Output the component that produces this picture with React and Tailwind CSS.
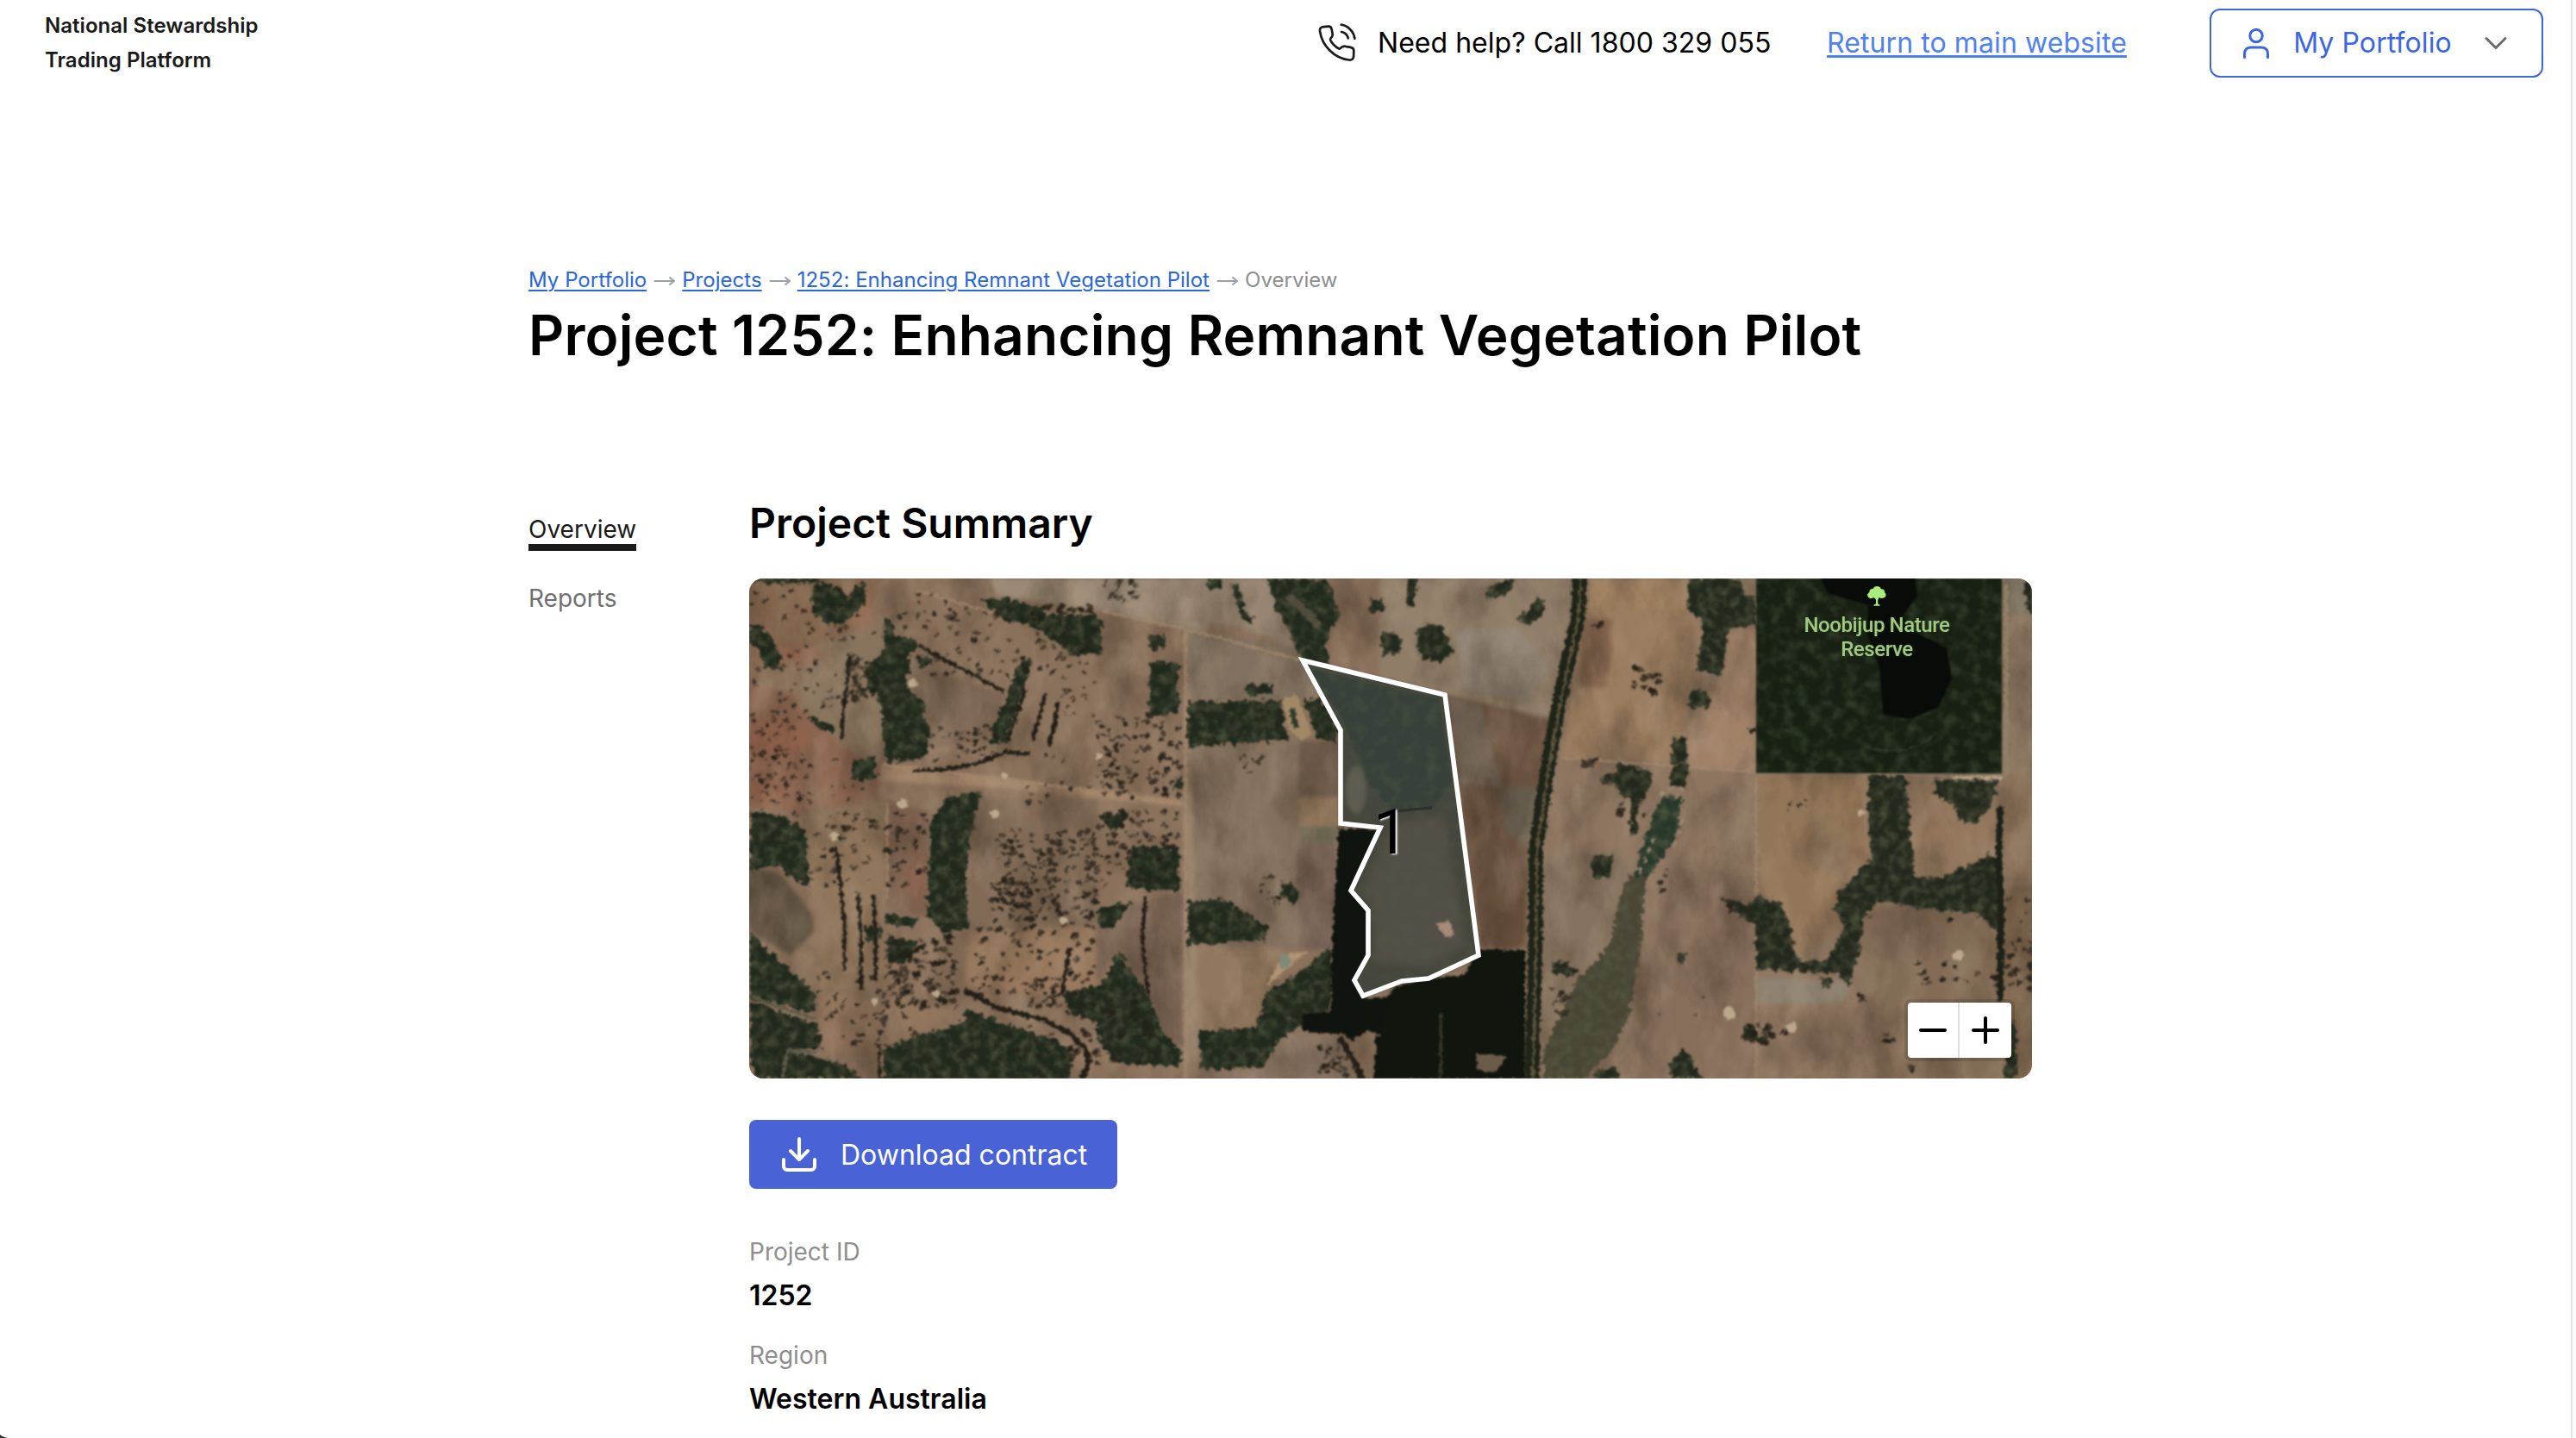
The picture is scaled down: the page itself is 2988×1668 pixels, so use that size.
import React from "react";

/* Small deterministic generator so that the trees are always scattered alike. */
function makeRandom(seed) {
  let s = seed;
  return () => {
    s = (s * 16807) % 2147483647;
    return s / 2147483647;
  };
}

function scatter(areas, seed) {
  const rnd = makeRandom(seed);
  const dots = [];
  areas.forEach(([x0, y0, x1, y1, n, size]) => {
    for (let i = 0; i < n; i++) {
      dots.push({
        x: x0 + rnd() * (x1 - x0),
        y: y0 + rnd() * (y1 - y0),
        rx: size * (0.5 + rnd() * 0.8),
        ry: size * (0.4 + rnd() * 0.7),
        a: -60 + rnd() * 50,
        o: 0.5 + rnd() * 0.45,
      });
    }
  });
  return dots;
}

const WEST = "matrix(0.4783 0 0 0.38265 -9 -11)";
const EAST = "matrix(0.4911 0 0 0.38265 731 -11)";

const westFields = [
  ["0,0 1600,0 1600,1600 0,1600", "#8a715b"],
  ["0,340 130,380 240,540 340,600 330,700 150,740 0,720", "#8a6550"],
  ["0,0 350,0 300,180 130,260 60,340 0,340", "#84674f"],
  ["150,250 345,150 345,560 250,520 140,420", "#88745d"],
  ["440,300 640,380 600,520 460,540 410,390", "#7c6654"],
  ["560,690 860,700 860,1080 550,1100", "#806a56"],
  ["0,900 90,920 150,1010 190,1080 120,1170 20,1100", "#635545"],
  ["160,750 350,700 350,1270 190,1270 165,950", "#90765c"],
  ["350,700 460,740 450,1050 355,1050", "#7b604e"],
  ["340,590 1070,700 1070,720 640,665 330,640", "#a3866a"],
  ["860,1040 1070,980 1070,1450 1020,1420 920,1160 860,1250", "#7b6555"],
  ["550,1100 860,1080 860,1270 780,1290 540,1270", "#98795e"],
  ["600,30 1100,30 1130,190 1070,180 880,130 730,100 620,80", "#9b8a77"],
  ["1100,30 1280,30 1350,250 1200,170 1080,160", "#968472"],
  ["1075,180 1350,240 1400,390 1080,400", "#80705f"],
  ["1080,535 1360,520 1350,1160 1080,1140", "#83705e"],
  ["1355,520 1450,520 1450,690 1350,690", "#6e5b4b"],
  ["1350,690 1450,690 1450,780 1350,780", "#8d7357"],
  ["1355,780 1450,780 1450,830 1355,830", "#6a6550"],
  ["1350,830 1445,830 1440,1150 1350,1160", "#776356"],
  ["1080,1140 1375,1155 1280,1260 1250,1400 1080,1400", "#91775d"],
  ["1260,1520 1330,1405 1450,1420 1500,1600 1110,1600 1110,1520", "#8a7564"],
  ["190,1280 340,1320 530,1330 350,1460 200,1470", "#92755d"],
  ["1072,190 1085,190 1110,1600 1072,1600", "#97806a"],
];

const westWoods = [
  "20,28 190,28 185,42 60,45 20,36",
  "175,60 200,38 240,60 262,90 280,55 300,45 298,110 262,150 235,170 205,165 170,130",
  "20,170 45,175 75,210 98,275 85,305 55,300 40,240 20,225",
  "348,150 365,150 370,200 420,210 430,240 405,255 410,300 395,350 445,405 440,450 458,480 452,560 420,580 350,585 340,430 330,380 305,370 300,300 345,250",
  "425,265 460,268 462,292 430,300",
  "585,90 640,88 730,115 730,135 850,140 875,160 875,255 800,265 770,225 700,170 640,155 600,120",
  "690,270 705,272 685,370 640,525 604,530 610,480 650,370 665,310",
  "990,282 1060,285 1060,435 988,448",
  "985,200 1020,200 1028,235 1000,248 988,230",
  "1082,405 1308,396 1325,520 1082,538",
  "1365,395 1400,390 1450,485 1440,525 1395,515",
  "1130,32 1165,32 1165,58 1135,60",
  "1188,45 1205,45 1222,140 1245,150 1240,165 1215,155",
  "1275,30 1420,30 1450,150 1430,180 1415,230 1430,290 1355,270 1330,190 1300,130",
  "1225,350 1290,350 1290,380 1225,382",
  "1525,90 1555,90 1560,125 1525,135",
  "20,735 90,745 155,790 165,960 130,945 90,900 20,915",
  "500,690 580,680 555,820 545,920 550,1095 490,1100 450,1050 455,900 460,760",
  "945,838 1060,845 1062,980 935,965",
  "870,745 935,740 930,780 900,797",
  "865,1030 945,1010 900,1085 865,1085",
  "1082,1005 1170,1003 1280,1090 1265,1125 1082,1140",
  "1310,965 1335,950 1352,970 1350,1000 1335,1015 1310,990",
  "20,1100 60,1150 130,1230 180,1290 182,1350 20,1300",
  "20,1310 185,1380 188,1455 110,1460 250,1500 290,1545 100,1545 40,1545 20,1500",
  "345,1455 470,1400 540,1370 542,1330 640,1380 740,1420 800,1455 800,1510 790,1600 345,1600",
  "780,1285 870,1260 915,1160 990,1300 1020,1400 1065,1460 1065,1505 910,1500 870,1440 860,1370 800,1350",
  "1110,1400 1250,1390 1270,1290 1350,1225 1430,1145 1430,1330 1310,1420 1265,1510 1115,1515",
  "350,1045 425,1060 420,1085 350,1075",
  "298,1085 340,1080 342,1120 305,1130",
  "355,1110 430,1130 400,1200 355,1190",
  "270,585 325,565 322,638 268,640",
  "165,445 225,475 225,495 175,475",
  "1052,635 1070,635 1070,668 1050,665",
];

const westBlack = [
  "1448,785 1550,790 1480,975 1525,1035 1525,1170 1485,1245 1505,1300 1560,1300 1600,1270 1600,1360 1560,1420 1520,1400 1480,1430 1460,1410 1360,1400 1360,1350 1430,1340 1430,1200",
  "1540,1420 1600,1380 1600,1600 1530,1600",
];

const westLines = [
  ["262,260 255,360 248,420 243,515", 9],
  ["430,232 530,300 640,372", 10],
  ["415,610 490,608 570,590 640,555 700,560", 11],
  ["688,365 668,440 645,520", 9],
  ["738,375 722,450 705,520", 9],
  ["768,400 760,470 745,540", 9],
  ["230,840 240,950 250,1080 250,1220", 8],
  ["282,980 290,1100 290,1275", 9],
  ["320,990 325,1120 326,1250", 9],
  ["980,990 972,1120 980,1230 988,1290", 9],
  ["795,1150 785,1230 778,1290", 9],
  ["540,1275 620,1330 730,1365 800,1410 838,1460 840,1510 825,1545", 13],
  ["335,1440 335,1545", 7],
  ["1450,1420 1490,1500 1510,1560", 16],
];

const westTrees = scatter(
  [
    [20, 180, 340, 420, 55, 6], [20, 420, 160, 720, 70, 6], [380, 110, 860, 330, 100, 7],
    [20, 40, 560, 180, 34, 7], [860, 440, 1065, 690, 100, 7], [460, 460, 620, 580, 40, 6],
    [620, 790, 860, 1060, 200, 7], [850, 730, 1060, 960, 110, 7], [350, 1110, 520, 1330, 110, 8],
    [560, 1060, 860, 1300, 85, 7], [165, 740, 450, 960, 80, 7], [620, 560, 960, 720, 26, 6],
    [780, 340, 860, 450, 18, 5], [600, 940, 700, 1030, 36, 7], [780, 1310, 1000, 1500, 60, 7],
    [260, 270, 330, 400, 36, 8], [880, 30, 960, 100, 16, 8], [680, 1240, 780, 1330, 34, 7],
    [180, 1220, 420, 1460, 60, 7], [1210, 560, 1265, 620, 16, 5], [1260, 930, 1320, 1020, 18, 5],
    [740, 110, 860, 135, 14, 7], [640, 1350, 860, 1480, 22, 6], [20, 560, 340, 780, 40, 5],
    [1400, 1440, 1470, 1540, 34, 6],
  ],
  4711
);

const eastFields = [
  ["0,0 1600,0 1600,1600 0,1600", "#8b745f"],
  ["0,30 460,30 410,460 150,380 0,330", "#8f7d68"],
  ["180,190 330,180 400,300 350,400 200,360", "#918477"],
  ["155,380 410,455 355,840 345,1150 240,1150", "#69513f"],
  ["160,390 240,410 290,660 190,650", "#6f6153"],
  ["275,660 380,660 350,840 300,800", "#645b4c"],
  ["493,30 730,30 730,120 495,120", "#a18263"],
  ["490,120 730,120 760,180 750,320 720,480 690,590 430,570", "#9a7d60"],
  ["480,150 550,150 540,360 470,360", "#866750"],
  ["820,180 888,175 888,612 728,605 728,480 810,330", "#a08168"],
  ["425,575 890,615 890,980 620,940 560,1000 480,1240 385,1250 390,900", "#8d7560"],
  ["895,620 1150,630 1155,880 1080,980 1100,1080 985,1180 950,1020 895,980", "#927659"],
  ["1250,630 1460,720 1460,870 1340,930 1260,940", "#91765b"],
  ["385,880 560,850 600,930 540,1140 460,1260 385,1440", "#85735f"],
  ["625,960 890,1000 890,1540 560,1540 605,1220", "#866e5a"],
  ["890,1210 1120,1250 1240,1540 890,1540", "#907761"],
  ["890,1240 1110,1250 1100,1310 890,1320", "#8e8272"],
  ["1145,1010 1430,1050 1465,1110 1465,1545 1180,1545 1120,1250", "#836c56"],
  ["1160,1030 1290,1030 1330,1120 1240,1205 1160,1170", "#7d6653"],
  ["1475,30 1570,30 1570,620 1475,620", "#8c7761"],
  ["1475,620 1570,620 1570,940 1475,940", "#8d745a"],
  ["1475,960 1570,960 1570,1545 1475,1545", "#80684f"],
  ["1475,30 1530,30 1530,140 1475,140", "#7c7362"],
];

const eastWoods = [
  "66,30 92,30 78,110 66,115",
  "5,200 30,190 52,215 45,255 15,260 5,235",
  "90,180 120,165 150,180 175,250 145,280 105,275 88,230",
  "250,60 280,40 318,32 310,60 275,90 252,80",
  "370,90 388,95 388,140 355,172 325,150 350,125",
  "730,30 852,30 860,75 888,85 888,170 825,175 808,320 750,310 765,160 730,125",
  "735,370 760,365 785,400 778,418 728,415",
  "690,512 728,512 725,590 690,590",
  "690,595 728,595 722,665 688,660",
  "560,590 610,600 648,620 630,690 605,720 610,790 595,810 590,770 595,700 575,690 560,655 520,650 530,625 560,615",
  "500,875 550,872 545,930 505,940",
  "410,1195 440,1190 472,1220 440,1235 405,1215",
  "685,1500 715,1455 735,1480 765,1545 690,1545",
  "510,1520 560,1510 570,1545 510,1545",
  "700,1165 725,1165 712,1200",
  "860,1385 885,1380 890,1420 925,1415 900,1440 862,1420",
  "830,1005 870,1015 900,990 950,1020 970,1080 985,1185 1055,1190 1100,1080 1075,1030 1085,980 1165,870 1155,790 1155,625 1245,628 1262,935 1330,935 1440,865 1470,880 1475,1110 1400,1040 1320,1035 1180,1005 1145,1050 1130,1180 1110,1262 1080,1225 890,1212 888,1080 840,1040",
  "1310,640 1460,640 1445,720 1410,765 1380,770 1360,720 1310,680",
  "1522,40 1570,40 1570,160 1530,130",
  "1480,1360 1505,1380 1507,1540 1475,1545",
  "1045,1240 1065,1240 1065,1265 1045,1265",
];

const eastCreek = [
  ["670,690 715,690 705,800 670,870 630,940 605,935 615,860 650,740", "#27382a"],
  ["590,930 630,935 615,1160 590,1350 555,1450 480,1545 390,1545 385,1470 410,1400 460,1260 545,1140 565,1010", "#4a4636"],
];

const eastTrees = scatter(
  [
    [600, 300, 660, 385, 16, 9], [400, 1270, 445, 1380, 9, 8], [655, 910, 680, 980, 7, 7],
    [1130, 1280, 1150, 1320, 5, 7], [1240, 1190, 1460, 1275, 18, 7], [1480, 1150, 1550, 1280, 24, 9],
    [1180, 1400, 1215, 1430, 4, 8], [480, 575, 510, 600, 6, 9], [560, 700, 640, 760, 7, 9],
    [860, 1380, 930, 1440, 12, 10], [810, 1000, 850, 1040, 8, 8], [500, 155, 535, 180, 7, 8],
    [1475, 980, 1550, 1140, 8, 6], [950, 1390, 985, 1420, 6, 6], [960, 700, 1010, 740, 5, 5],
    [1340, 1060, 1360, 1090, 2, 8], [1250, 1500, 1270, 1540, 4, 6], [870, 480, 888, 495, 4, 8],
    [610, 1300, 900, 1380, 3, 5], [1150, 1040, 1180, 1060, 2, 5],
  ],
  977
);

const paleSpots = [
  [190, 122, 5], [178, 262, 6], [285, 273, 5], [99, 299, 5], [406, 206, 4], [365, 397, 4],
  [217, 482, 4], [145, 491, 4], [296, 229, 4],
];

const parcel =
  "642,95 807,135 846,437 788,464 757,467 712,484 702,466 718,437 718,385 698,362 732,289 686,284 686,176";

function SatelliteMap() {
  const area = { x: 0, y: 0, width: 1488, height: 580, filterUnits: "userSpaceOnUse", colorInterpolationFilters: "sRGB" };
  return (
    <svg className="block h-[580px] w-[1488px]" viewBox="0 0 1488 580">
      <defs>
        <filter id="woods" {...area}>
          <feTurbulence type="fractalNoise" baseFrequency="0.15" numOctaves="3" seed="4" result="n" />
          <feDisplacementMap in="SourceGraphic" in2="n" scale="12" xChannelSelector="R" yChannelSelector="G" result="d" />
          <feTurbulence type="fractalNoise" baseFrequency="0.09" numOctaves="5" seed="14" result="g" />
          <feColorMatrix in="g" type="matrix" values="0 0 0 0 0.34  0 0 0 0 0.35  0 0 0 0 0.26  1.7 0 0 0 -0.68" result="c" />
          <feComposite in="c" in2="d" operator="in" result="t" />
          <feMerge result="m"><feMergeNode in="d" /><feMergeNode in="t" /></feMerge>
          <feGaussianBlur in="m" stdDeviation="0.9" />
        </filter>
        <filter id="reserve" {...area}>
          <feTurbulence type="fractalNoise" baseFrequency="0.07" numOctaves="5" seed="31" result="g" />
          <feColorMatrix in="g" type="matrix" values="0 0 0 0 0.3  0 0 0 0 0.34  0 0 0 0 0.25  1.3 0 0 0 -0.56" result="c" />
          <feComposite in="c" in2="SourceGraphic" operator="in" result="t" />
          <feMerge result="m"><feMergeNode in="SourceGraphic" /><feMergeNode in="t" /></feMerge>
          <feGaussianBlur in="m" stdDeviation="1" />
        </filter>
        <filter id="rough" {...area}>
          <feTurbulence type="fractalNoise" baseFrequency="0.2" numOctaves="2" seed="9" result="n" />
          <feDisplacementMap in="SourceGraphic" in2="n" scale="7" xChannelSelector="R" yChannelSelector="G" result="d" />
          <feGaussianBlur in="d" stdDeviation="0.8" />
        </filter>
        <filter id="soft" {...area}>
          <feGaussianBlur stdDeviation="5" />
        </filter>
        <filter id="fields" {...area}>
          <feGaussianBlur stdDeviation="2.5" />
        </filter>
        <filter id="mottle" {...area}>
          <feTurbulence type="fractalNoise" baseFrequency="0.018 0.012" numOctaves="5" seed="21" />
          <feColorMatrix type="matrix" values="0 0 0 0 0.22  0 0 0 0 0.17  0 0 0 0 0.12  1.6 0 0 0 -0.68" />
        </filter>
        <filter id="light" {...area}>
          <feTurbulence type="fractalNoise" baseFrequency="0.03 0.014" numOctaves="5" seed="63" />
          <feColorMatrix type="matrix" values="0 0 0 0 0.74  0 0 0 0 0.66  0 0 0 0 0.56  1.6 0 0 0 -0.7" />
        </filter>
      </defs>

      <g filter="url(#fields)">
        <g transform={WEST}>
          {westFields.map(([p, c]) => <polygon key={p} points={p} fill={c} />)}
        </g>
        <g transform={EAST}>
          {eastFields.map(([p, c]) => <polygon key={p} points={p} fill={c} />)}
        </g>
      </g>
      <g filter="url(#soft)" fill="#9a5f48" opacity="0.4">
        <ellipse cx="30" cy="185" rx="40" ry="22" />
        <ellipse cx="22" cy="245" rx="22" ry="14" />
        <ellipse cx="130" cy="40" rx="14" ry="24" />
        <ellipse cx="60" cy="90" rx="34" ry="10" />
        <ellipse cx="195" cy="345" rx="12" ry="34" />
      </g>
      <rect width="1488" height="580" filter="url(#mottle)" opacity="0.6" />
      <rect width="1488" height="580" filter="url(#light)" opacity="0.4" />

      <g filter="url(#rough)" fill="none" stroke="#a78c70" strokeWidth="3" opacity="0.6">
        <path d="M155 216 L330 237 L503 262M506 60V580M196 14 L290 42M410 38 L520 62 L640 95M160 260V370" />
        <path d="M1168 230V580M940 208 L1165 224" />
      </g>
      <path d="M1458 8V228" fill="none" stroke="#8f8067" strokeWidth="5" filter="url(#rough)" />

      <g filter="url(#woods)">
        <g transform={WEST} fill="#20291c">
          {westWoods.map((p) => <polygon key={p} points={p} />)}
        </g>
        <g transform={EAST}>
          <g fill="#22281c">{eastWoods.map((p) => <polygon key={p} points={p} />)}</g>
          {eastCreek.map(([p, c]) => <polygon key={p} points={p} fill={c} />)}
        </g>
      </g>
      <g filter="url(#reserve)">
        <polygon transform={EAST} points="890,20 1470,20 1470,620 890,618" fill="#172012" />
      </g>

      <g filter="url(#rough)">
        <g transform={WEST}>
          {westBlack.map((p) => <polygon key={p} points={p} fill="#10140e" />)}
          {westLines.map(([p, w]) => (
            <polyline key={p} points={p} fill="none" stroke="#231f18" strokeWidth={w} />
          ))}
          {westTrees.map((t, i) => (
            <ellipse key={i} cx={t.x} cy={t.y} rx={t.rx} ry={t.ry} fill="#241f17" opacity={t.o} transform={`rotate(${t.a} ${t.x} ${t.y})`} />
          ))}
          <polygon points="1312,400 1340,380 1352,400 1385,500 1360,520 1330,490" fill="#a18968" />
          <polygon points="1328,425 1340,422 1352,480 1338,482" fill="#2f3a2a" />
          <path d="M1275 1265 L1375 1158 L1330 1165 L1298 1200Z" fill="#b19474" />
          <ellipse cx="1318" cy="1188" rx="14" ry="22" fill="#7f8a78" />
          <path d="M20 1295 L180 1365M100 1545 L110 1460 L180 1465" fill="none" stroke="#5b5a47" strokeWidth="9" />
          <path d="M1325 80 L1370 130 L1400 175" fill="none" stroke="#5d5546" strokeWidth="22" opacity="0.8" />
        </g>
        <g transform={EAST}>
          <path d="M474 20 L468 150 L425 400 L395 620 L370 850 L368 1150 L360 1560" fill="none" stroke="#1f2418" strokeWidth="34" />
          <path d="M476 20 L470 150 L428 400 L398 620 L372 850 L370 1150 L362 1560" fill="none" stroke="#5f563e" strokeWidth="6" />
          <polygon points="235,1153 345,1155 343,1545 0,1545 0,1400 30,1270 115,1240 200,1230" fill="#10150e" />
          <path d="M145 1350 L145 1545" stroke="#3b3628" strokeWidth="7" />
          <path d="M228 1470 L300 1475 L275 1525 L232 1520Z" fill="#6d5b4a" />
          <path d="M1466 720 L1462 900 L1468 1050 L1466 1310" fill="none" stroke="#1e2118" strokeWidth="15" />
          <path d="M1350 632 H1470" stroke="#b5a98f" strokeWidth="8" />
          {eastTrees.map((t, i) => (
            <ellipse key={i} cx={t.x} cy={t.y} rx={t.rx} ry={t.ry} fill="#241f17" opacity={t.o} transform={`rotate(${t.a} ${t.x} ${t.y})`} />
          ))}
        </g>
        <g fill="#bba88c">
          {paleSpots.map(([x, y, r]) => <circle key={`${x}-${y}`} cx={x} cy={y} r={r} />)}
          <circle cx="1137" cy="504" r="7" /><circle cx="1209" cy="521" r="6" /><circle cx="1402" cy="437" r="6" />
          <circle cx="1290" cy="271" r="4" />
        </g>
        <path d="M1056 251 L1066 243 L1083 244 L1080 290 L1070 315M1050 300 L1036 335 L1030 345" fill="none" stroke="#9b8c76" strokeWidth="2.500" strokeDasharray="7 6" />
        <path d="M1295 195 Q1345 210 1378 178" fill="none" stroke="#3d4639" strokeWidth="2" opacity="0.7" />
      </g>
      <g filter="url(#fields)" transform={EAST}>
        <path d="M1040 20 L1265 20 L1270 80 L1235 145 L1265 190 L1340 240 L1352 330 L1320 420 L1250 455 L1190 440 L1182 300 L1150 190 L1155 110 L1060 75Z" fill="#080b08" />
        <ellipse cx="655" cy="1520" rx="36" ry="22" fill="#a1958a" opacity="0.7" />
      </g>

      <polygon points={parcel} fill="#484c44" filter="url(#fields)" />
      <g filter="url(#reserve)">
        <polygon points={parcel} fill="#45463d" />
        <polygon points="650,105 800,140 815,235 792,268 750,272 715,235 690,165" fill="#374039" />
      </g>
      <polygon points="752,282 806,276 830,425 788,450 725,445 725,385 712,362 738,300" fill="#635a51" opacity="0.45" filter="url(#soft)" />
      <ellipse cx="704" cy="245" rx="12" ry="28" fill="#6f6b5e" opacity="0.6" filter="url(#fields)" />
      <path d="M796 400 L812 398 L818 414 L808 416Z" fill="#a58a78" filter="url(#rough)" />
      <path d="M748 270 L792 266" stroke="#2b322c" strokeWidth="3" />
      <polygon points={parcel} fill="none" stroke="#fff" strokeWidth="5.600" strokeLinejoin="miter" />
    </svg>
  );
}

function PlaceLabel() {
  return (
    <div className="absolute left-[1207px] top-[8px] flex w-[202px] flex-col items-center text-center font-['Roboto',sans-serif] text-[24px] font-medium leading-[28px] tracking-[-0.4px] text-[#a0c884] [text-shadow:0_0_3px_#2c421f]">
      <svg className="h-[26px] w-[24px]" viewBox="0 0 24 24" preserveAspectRatio="none" fill="#a9ee7c">
        <path d="M12 1c2.600 0 4.200 1 5 3 2.600-.3 4.200 1.300 4 3.500 2.200 1.300 2 4.500-.3 5.500-2.500 1.600-4.700.9-6.200 0l-1.300 3v3.500l2.300 1.600V22H8.500v-.9L11 19.500v-4.300L8.600 13C6 14.700 2.500 14 1.500 11.700.6 9.500 1.800 8 3.300 7.600 3.200 4.700 5.200 3.500 7.400 3.800 8.500 1.800 10 1 12 1Z" />
      </svg>
      <span className="mt-[6px] whitespace-nowrap">Noobijup Nature</span>
      <span>Reserve</span>
    </div>
  );
}

function ZoomControl() {
  return (
    <div className="absolute right-[24px] top-[492px] flex h-[64px] w-[120px] rounded-[4px] bg-white shadow-[0_0_0_4px_rgba(0,0,0,0.12)]">
      <button className="flex w-[60px] items-center justify-center border-r-2 border-[#dddddd]" aria-label="Zoom out">
        <svg className="h-[34px] w-[34px]" viewBox="0 0 34 34" stroke="#000" strokeWidth="4" strokeLinecap="round"><path d="M3 17H31" /></svg>
      </button>
      <button className="flex w-[60px] items-center justify-center" aria-label="Zoom in">
        <svg className="h-[34px] w-[34px]" viewBox="0 0 34 34" stroke="#000" strokeWidth="4" strokeLinecap="round"><path d="M3 17H31M17 3V31" /></svg>
      </button>
    </div>
  );
}

function Arrow() {
  return (
    <svg className="mx-[8px] mt-[2px] h-[16px] w-[25px]" viewBox="0 0 25 16" fill="none" stroke="#9a9fab" strokeWidth="2" strokeLinecap="round">
      <path d="M1.500 8H23.500M19 4 24 8 19 12" />
    </svg>
  );
}

function Header() {
  return (
    <header className="flex h-[100px] items-start">
      <div className="ml-[52px] mt-[10px] text-[24px] font-semibold leading-[40px] tracking-[0.04px] text-[#1a1a1a]">
        <div>National Stewardship</div>
        <div>Trading Platform</div>
      </div>
      <div className="ml-auto mr-[32px] mt-[10px] flex h-[80px] items-center text-[32px] leading-[40px]">
        <svg className="h-[48px] w-[48px]" viewBox="0 0 48 48" fill="none" stroke="#1a1a1a" strokeWidth="2.700" strokeLinecap="round" strokeLinejoin="round">
          <path d="M7 5.200 12.800 4.700c2.400-.1 3.500.9 3.900 3.200l1 5.800c.2 1.500-.2 2.500-1.300 3.700-1.400 1.500-1.900 1.700-1.200 3.200 2.300 4.300 5.500 7.500 9.600 9.800 1 .5 1.500.2 2.300-.7 1.600-1.900 3.300-2.400 5.700-1.900l5.800 1c2.600.5 3.700 1.600 3.700 4l-.2 6.700c-.3 3-2.200 4.300-5.100 4C19.500 41.600 5.500 27 3 10.200 2.600 7.200 3.800 5.500 7 5.200Z" />
          <path d="M27.700 2.700C35.500 3.800 42.200 10.500 43.400 18.700M28 11c4 .8 7 3.700 7.700 7.300" />
        </svg>
        <span className="ml-[22px] w-[456px] whitespace-nowrap tracking-[0.03px] text-black">Need help? Call 1800 329 055</span>
        <a className="ml-[65px] w-[348px] whitespace-nowrap tracking-[0.09px] text-[#4f82f0] underline decoration-[3px] underline-offset-[3px]">Return to main website</a>
        <button className="ml-[96px] flex h-[80px] w-[387px] items-center rounded-[12px] border-2 border-[#3b66e3] text-[#3b66e3]">
          <svg className="ml-[35px] h-[36px] w-[34px]" viewBox="0 0 34 36" fill="none" stroke="currentColor" strokeWidth="3" strokeLinecap="round">
            <circle cx="17" cy="9.500" r="7.200" />
            <path d="M3.500 34.500v-4c0-4.500 2.500-7.500 7-7.500h13c4.500 0 7 3 7 7.500v4" />
          </svg>
          <span className="ml-[26px] w-[184px] whitespace-nowrap tracking-[0.1px]">My Portfolio</span>
          <svg className="ml-[37px] h-[16px] w-[28px]" viewBox="0 0 28 16" fill="none" stroke="#6b6b6b" strokeWidth="3" strokeLinecap="round" strokeLinejoin="round">
            <path d="M3 2.500 14 13.500 25 2.500" />
          </svg>
        </button>
      </div>
    </header>
  );
}

function Fact({ label, value }) {
  return (
    <div className="h-[120px]">
      <dt className="text-[28px] leading-[40px] text-[#8e8e8e]">{label}</dt>
      <dd className="mt-[7px] text-[32px] font-semibold leading-[48px] text-black">{value}</dd>
    </div>
  );
}

export default function App() {
  const link = "text-[#2965dc] underline decoration-2 underline-offset-[3px]";
  return (
    <div className="relative flex h-[1668px] w-[2988px] overflow-hidden bg-white font-['Inter',sans-serif] text-black">
      <div className="w-full">
        <Header />
        <main className="ml-[613px] w-[1744px]">
          <nav className="mt-[205px] flex h-[40px] items-center whitespace-nowrap text-[24px] leading-[40px] tracking-[0.03px]">
            <a className={link}>My Portfolio</a>
            <Arrow />
            <a className={link}>Projects</a>
            <Arrow />
            <a className={link}>1252: Enhancing Remnant Vegetation Pilot</a>
            <Arrow />
            <span className="text-[#8e8e8e]">Overview</span>
          </nav>
          <h1 className="mt-[4px] whitespace-nowrap text-[64px] font-semibold leading-[80px] tracking-[0.15px]">Project 1252: Enhancing Remnant Vegetation Pilot</h1>
          <div className="mt-[146px] flex">
            <aside className="flex w-[256px] flex-col items-start pt-[19px] text-[28px] leading-[40px]">
              <a className="box-content h-[37px] border-b-8 border-[#1a1a1a] text-[#1a1a1a]">Overview</a>
              <a className="mt-[35px] text-[#6f6f6f]">Reports</a>
            </aside>
            <section className="w-[1488px]">
              <h2 className="h-[96px] whitespace-nowrap text-[48px] font-semibold leading-[64px]">Project Summary</h2>
              <div className="relative h-[580px] w-[1488px] overflow-hidden rounded-[16px]">
                <SatelliteMap />
                <span className="absolute left-[724px] top-[255px] font-['Roboto',sans-serif] text-[72px] leading-[80px] text-black [text-shadow:2px_1px_2px_#ffffff]">1</span>
                <PlaceLabel />
                <ZoomControl />
              </div>
              <button className="mt-[48px] flex h-[80px] w-[427px] items-center rounded-[8px] bg-[#4962d6] text-[32px] leading-[40px] text-white">
                <svg className="ml-[38px] h-[40px] w-[40px]" viewBox="0 0 40 40" fill="none" stroke="#fff" strokeWidth="4" strokeLinecap="round" strokeLinejoin="round">
                  <path d="M20 2V26M10 16 20 26 30 16M2 26v8a4 4 0 0 0 4 4h28a4 4 0 0 0 4-4v-8" />
                </svg>
                <span className="ml-[28px] mt-[2px] whitespace-nowrap">Download contract</span>
              </button>
              <dl className="mt-[53px]">
                <Fact label="Project ID" value="1252" />
                <Fact label="Region" value="Western Australia" />
              </dl>
            </section>
          </div>
        </main>
      </div>
      <div className="w-[6px] shrink-0 border-l-2 border-[#e4e4e4] bg-[#fafafa]" />
      <svg className="absolute bottom-0 left-0 h-[4px] w-[10px]" viewBox="0 0 10 4"><path d="M0 0Q3 3 10 4H0Z" fill="#333" /></svg>
    </div>
  );
}
